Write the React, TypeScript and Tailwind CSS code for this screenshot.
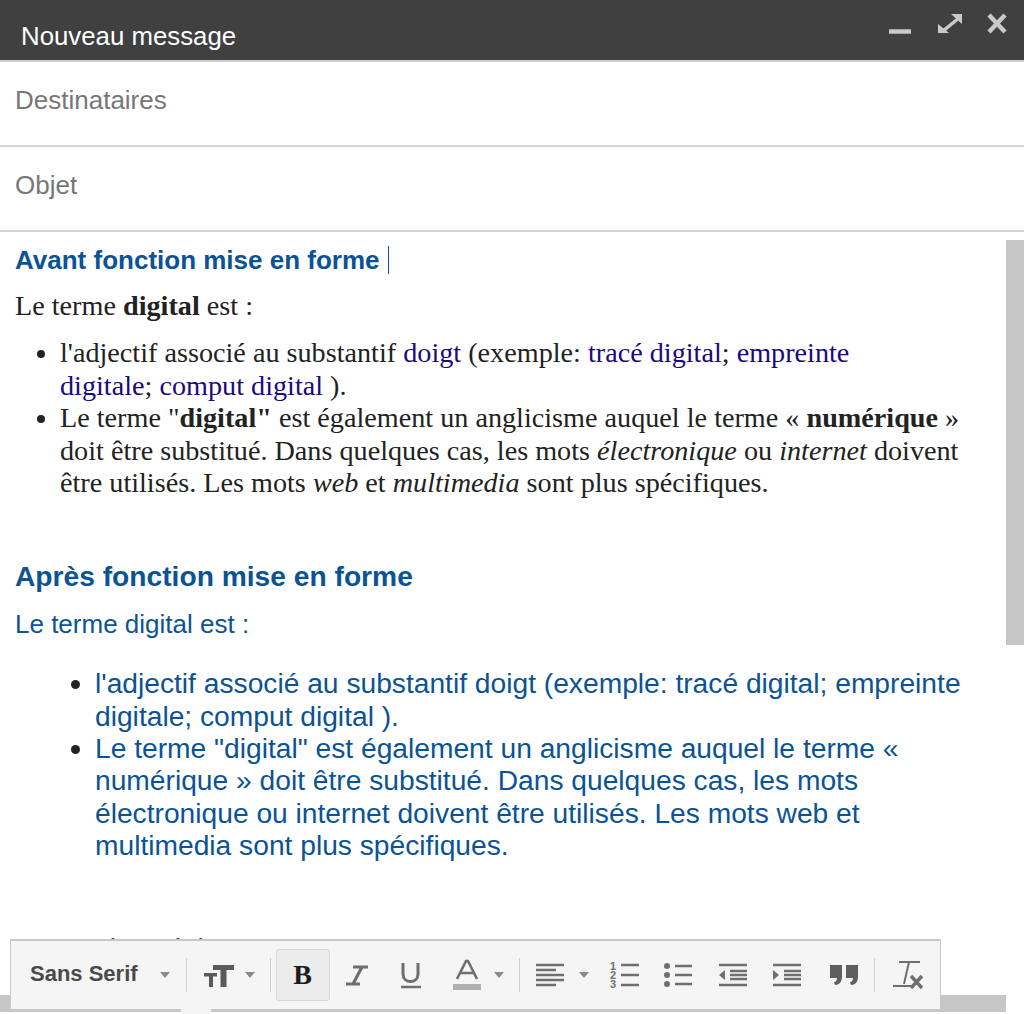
import React from "react";

const Caret = ({ className = "" }: { className?: string }) => (
  <svg width="12" height="6" viewBox="0 0 12 6" className={className}>
    <path d="M1 0h10L6 6z" fill="#8a8a8a" />
  </svg>
);

const Sep = () => <div className="w-px h-[34px] bg-[#cfcfcf]" />;

const Icon = ({ children, w = 30, h = 26 }: { children: React.ReactNode; w?: number; h?: number }) => (
  <svg width={w} height={h} viewBox={`0 0 ${w} ${h}`} className="shrink-0">
    {children}
  </svg>
);

const G = "#6f6f6f";

export default function App() {
  return (
    <div className="relative w-[1024px] h-[1014px] overflow-hidden bg-white font-['Liberation_Sans',Arial,sans-serif]">
      <header className="h-[60px] bg-[#404040] flex items-end justify-between">
        <div className="pl-[21px] pb-[8px] text-[25.8px] leading-[32px] text-white">Nouveau message</div>
        <div className="flex items-start h-full pt-[12px] pr-[6px]">
          <svg width="130" height="28" viewBox="0 0 130 28" fill="none">
            <path d="M1 19.500h22" stroke="#c9c9c9" strokeWidth="4.500" />
            <path d="M55 19l16-13" stroke="#c9c9c9" strokeWidth="3.500" />
            <path d="M63 2h11v10zM50 12v9h11z" fill="#c9c9c9" />
            <path d="M101 3l16 17M117 3l-16 17" stroke="#c9c9c9" strokeWidth="4.500" />
          </svg>
        </div>
      </header>

      <div className="h-[85px] border-t-2 border-[#cfcfcf] pl-[15px] pt-[22px] text-[26px] leading-[32px] text-[#777777]">
        Destinataires
      </div>
      <div className="h-[85px] border-t-2 border-[#d4d4d4] pl-[15px] pt-[22px] text-[26px] leading-[32px] text-[#777777]">
        Objet
      </div>

      <main className="relative border-t-2 border-[#d4d4d4] pl-[15px] pt-[12px]">
        <h2 className="text-[26px] leading-[32px] font-bold text-[#0b5394] flex items-center">
          Avant fonction mise en forme
          <span className="inline-block w-px h-[28px] bg-[#0b5394] ml-[8px]" />
        </h2>

        <div className="font-['Liberation_Serif','Times_New_Roman',serif] text-[28.2px] leading-[32.4px] text-[#222222]">
          <p className="mt-[14px]">
            Le terme <b>digital</b> est :
          </p>
          <ul className="list-disc pl-[45px] mt-[15px] w-[960px]">
            <li>
              l'adjectif associé au substantif <span className="text-[#1a0a80]">doigt</span> (exemple:{" "}
              <span className="text-[#1a0a80]">tracé digital</span>; <span className="text-[#1a0a80]">empreinte</span>
              <br />
              <span className="text-[#1a0a80]">digitale</span>; <span className="text-[#1a0a80]">comput digital</span> ).
            </li>
            <li>
              Le terme "<b>digital"</b> est également un anglicisme auquel le terme « <b>numérique</b> »
              <br />
              doit être substitué. Dans quelques cas, les mots <i>électronique</i> ou <i>internet</i> doivent
              <br />
              être utilisés. Les mots <i>web</i> et <i>multimedia</i> sont plus spécifiques.
            </li>
          </ul>
        </div>

        <h2 className="mt-[61px] text-[28.2px] leading-[32px] font-bold text-[#0b5394]">Après fonction mise en forme</h2>

        <div className="text-[#0b5394]">
          <p className="mt-[16px] text-[26px] leading-[32px]">Le terme digital est :</p>
          <ul className="list-disc marker:text-[#222222] pl-[80px] mt-[27px] w-[1000px] text-[28.2px] leading-[32.3px]">
            <li>
              l'adjectif associé au substantif doigt (exemple: tracé digital; empreinte
              <br />
              digitale; comput digital ).
            </li>
            <li>
              Le terme "digital" est également un anglicisme auquel le terme «
              <br />
              numérique » doit être substitué. Dans quelques cas, les mots
              <br />
              électronique ou internet doivent être utilisés. Les mots web et
              <br />
              multimedia sont plus spécifiques.
            </li>
          </ul>
          <p className="mt-[71px] pl-[7px] text-[28.2px] leading-[32px]">Exemple Précis</p>
        </div>
      </main>

      {/* vertical scrollbar */}
      <div className="absolute left-[1006px] top-[240px] w-[18px] h-[405px] bg-[#c6c6c6]" />
      {/* horizontal scrollbar */}
      <div className="absolute left-0 top-[995px] w-[1006px] h-[17px] bg-[#c6c6c6]" />

      {/* formatting toolbar */}
      <div className="absolute left-[10px] top-[939px] w-[931px] h-[72px] bg-[#f5f5f5] border-t-2 border-l border-r border-b-2 border-[#c8c8c8] flex items-center text-[#555]">
        <span className="ml-[19px] text-[22px] font-bold text-[#4a4a4a] leading-none mb-[3px]">Sans Serif</span>
        <Caret className="ml-[21px] mr-[15px]" />
        <Sep />
        <div className="ml-[17px]">
          <Icon w={30} h={26}>
            <path d="M9 3h21v5h-7.500v17h-6V8H9z M0 11h13v3.500H9V25H5V14.500H0z" fill="#5a5a5a" />
          </Icon>
        </div>
        <Caret className="ml-[10px] mr-[14px]" />
        <Sep />
        <div className="ml-[5px] w-[54px] h-[52px] rounded-[3px] bg-[#ececec] border border-[#d8d8d8] flex items-center justify-center text-[28px] font-bold text-[#1c1c1c] font-['Liberation_Serif',serif]">
          B
        </div>
        <div className="ml-[15px] w-[24px] flex justify-center">
          <Icon w={24} h={22}>
            <path d="M8 3h15M1 20h14M17 3L8 20" stroke={G} strokeWidth="3.200" fill="none" />
          </Icon>
        </div>
        <div className="ml-[31px]">
          <Icon w={22} h={28}>
            <path d="M3 2v11c0 10 15 10 15 0V2" stroke={G} strokeWidth="3" fill="none" />
            <path d="M1 26h20" stroke={G} strokeWidth="2.500" />
          </Icon>
        </div>
        <div className="ml-[30px]">
          <Icon w={30} h={32}>
            <path d="M5 20L14 2h2l9 18M9 14h12" stroke={G} strokeWidth="2.600" fill="none" />
            <rect x="1" y="25" width="28" height="6" fill="#b0b0b0" />
          </Icon>
        </div>
        <Caret className="ml-[11px] mr-[14px]" />
        <Sep />
        <div className="ml-[16px]">
          <Icon w={30} h={24}>
            <path d="M0 2h28M0 7h20M0 12h28M0 17h28M0 22h20" stroke={G} strokeWidth="2.400" />
          </Icon>
        </div>
        <Caret className="ml-[12px]" />
        <div className="ml-[19px]">
          <Icon w={30} h={28}>
            <path d="M12 4h18M12 14h18M12 24h18" stroke={G} strokeWidth="2.400" />
            <text fontSize="11" fontWeight="bold" fill={G}>
              <tspan x="1" y="9">1</tspan>
              <tspan x="1" y="18">2</tspan>
              <tspan x="1" y="27">3</tspan>
            </text>
          </Icon>
        </div>
        <div className="ml-[24px]">
          <Icon w={30} h={26}>
            <circle cx="4" cy="4" r="3" fill={G} />
            <circle cx="4" cy="13" r="3" fill={G} />
            <circle cx="4" cy="22" r="3" fill={G} />
            <path d="M12 4h17M12 13h17M12 22h17" stroke={G} strokeWidth="2.400" />
          </Icon>
        </div>
        <div className="ml-[25px]">
          <Icon w={30} h={26}>
            <path d="M1 3h28M12 9h17M12 13h17M12 17h17M1 23h28" stroke={G} strokeWidth="2.400" />
            <path d="M7 8v10l-6-5z" fill={G} />
          </Icon>
        </div>
        <div className="ml-[24px]">
          <Icon w={30} h={26}>
            <path d="M1 3h28M12 9h17M12 13h17M12 17h17M1 23h28" stroke={G} strokeWidth="2.400" />
            <path d="M1 8v10l6-5z" fill={G} />
          </Icon>
        </div>
        <div className="ml-[27px]">
          <Icon w={30} h={24}>
            <path d="M1 2h12v12c0 5-3 8-7 8l-1-3c2 0 3-2 3-4H1z M17 2h12v12c0 5-3 8-7 8l-1-3c2 0 3-2 3-4h-7z" fill="#5f5f5f" />
          </Icon>
        </div>
        <div className="ml-[15px]">
          <Sep />
        </div>
        <div className="ml-[17px]">
          <Icon w={32} h={32}>
            <path d="M7 3h21M17 3l-5 22M1 27h19" stroke={G} strokeWidth="2" fill="none" />
            <path d="M19 17l11 12M30 17L19 29" stroke={G} strokeWidth="3.400" fill="none" />
          </Icon>
        </div>
        {/* pointer under the toolbar */}
        <div className="absolute left-[170px] bottom-[-8px] w-[30px] h-[8px] bg-[#f5f5f5] rounded-b-[6px]" />
      </div>
    </div>
  );
}
